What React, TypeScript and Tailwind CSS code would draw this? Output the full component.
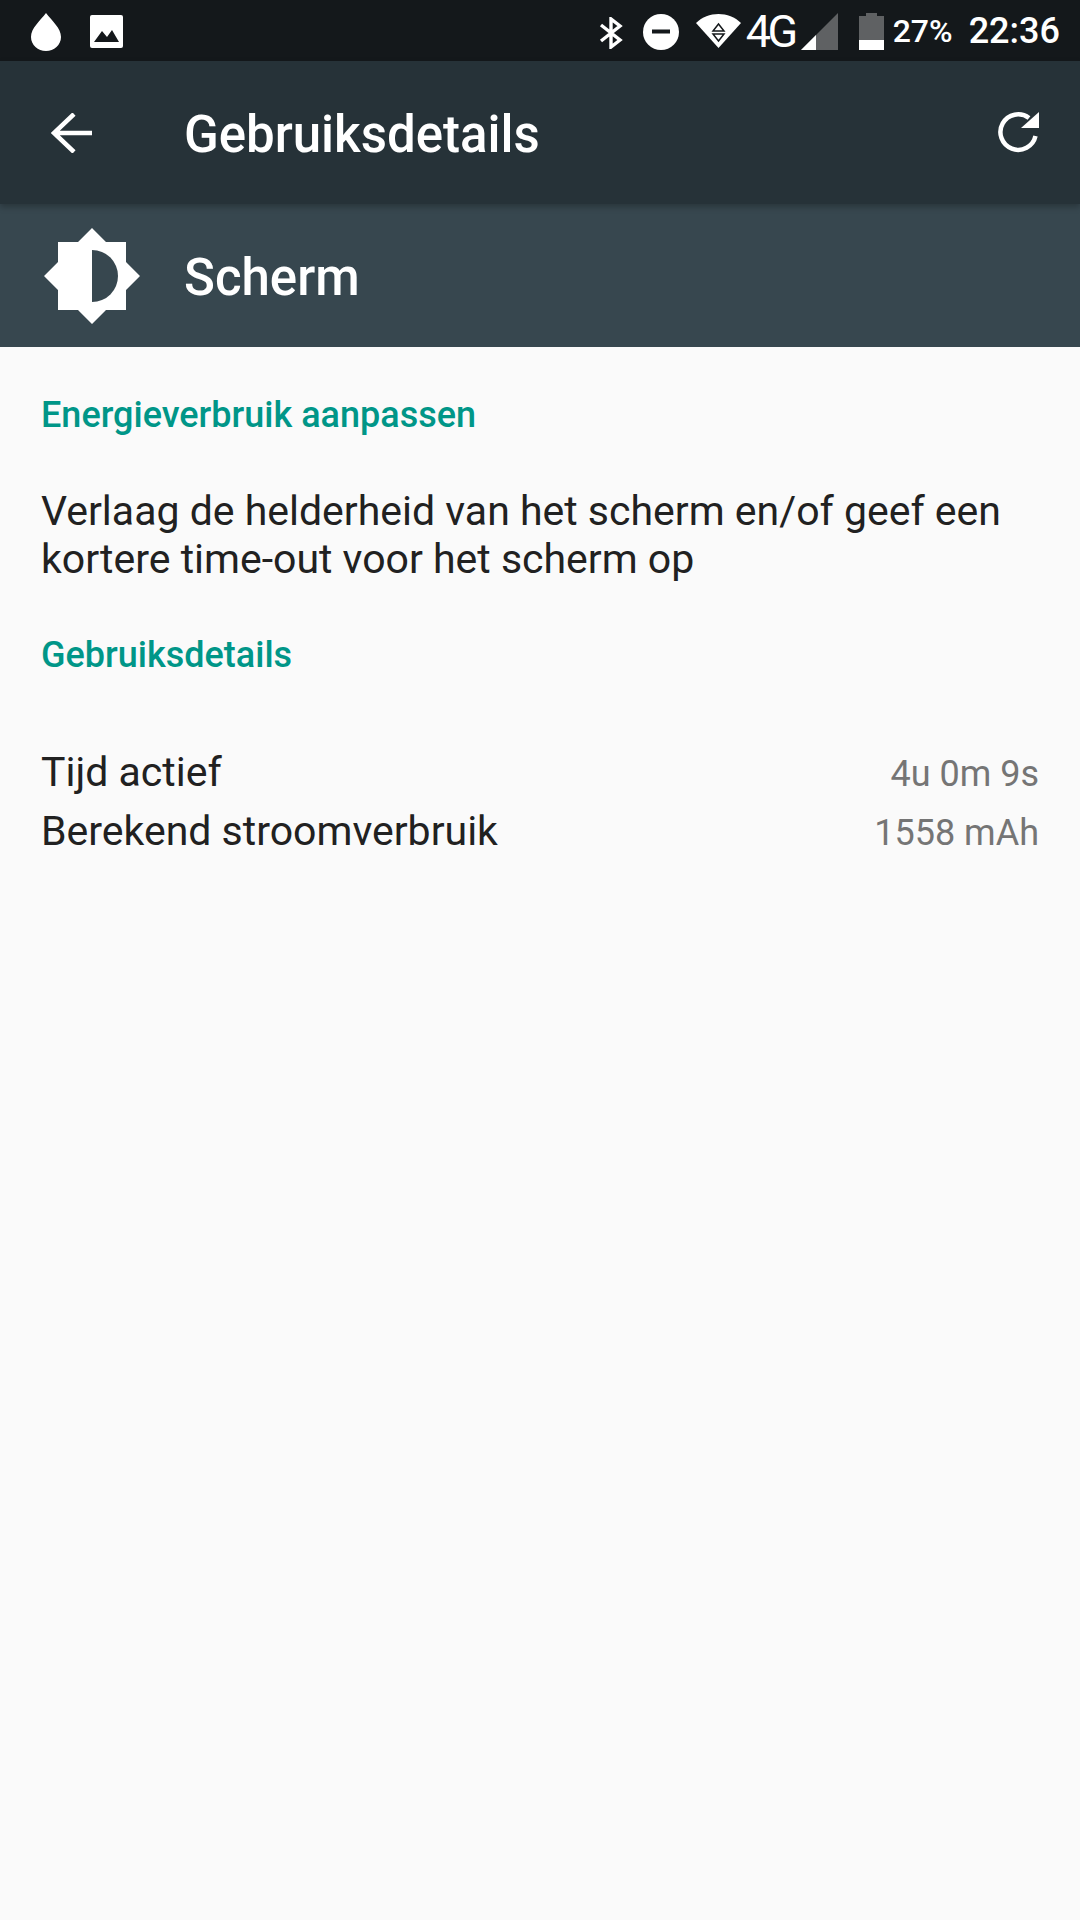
import React from 'react';

const StatusBar = () => (
  <div className="h-[61px] bg-[#14181b] flex items-center text-white shrink-0">
    <svg width="34" height="40" viewBox="0 0 34 40" className="ml-[29px] mt-[2px]" fill="#fff">
      <path d="M17 1 C11 9 2 16 2 25 C2 33 9 39 17 39 C25 39 32 33 32 25 C32 16 23 9 17 1 Z" />
    </svg>
    <svg width="33" height="33" viewBox="0 0 33 33" className="ml-[27px] mt-[1px]">
      <rect x="0" y="0" width="33" height="33" rx="2" fill="#fff" />
      <path d="M4 27 L12 16 L17 22 L22 15 L29 27 Z" fill="#14181b" />
    </svg>
    <div className="flex-1" />
    <svg width="24" height="32" viewBox="0 0 24 32" fill="none" stroke="#fff" strokeWidth="3.4" className="mt-[4px]">
      <path d="M2 8 L21 23 L12 30 L12 2 L21 9 L2 24" />
    </svg>
    <svg width="36" height="36" viewBox="0 0 36 36" className="ml-[20px] mt-[2px]">
      <circle cx="18" cy="18" r="18" fill="#fff" />
      <rect x="9" y="15.5" width="18" height="4" fill="#14181b" />
    </svg>
    <svg width="45" height="34" viewBox="0 0 45 34" className="ml-[17px] mt-[1px]">
      <path d="M0 9 C12 -3 33 -3 45 9 L22.5 34 Z" fill="#fff" />
      <path d="M22.5 10 L28 17 L17 17 Z M17 20 L28 20 L22.5 27 Z" fill="none" stroke="#14181b" strokeWidth="1.5" />
    </svg>
    <span className="ml-[5px] text-[45px] leading-none font-normal tracking-[-3.5px] w-[50px] mt-[1px]">4G</span>
    <svg width="37" height="37" viewBox="0 0 37 37" className="ml-[5px] mt-[1px]">
      <path d="M37 0 L37 37 L0 37 Z" fill="#5f6163" />
      <path d="M15 22 L15 37 L0 37 Z" fill="#fff" />
    </svg>
    <svg width="25" height="37" viewBox="0 0 25 37" className="ml-[21px] mt-[1px]">
      <path d="M0 3 L7 3 L7 0 L18 0 L18 3 L25 3 L25 27 L0 27 Z" fill="#5f6163" />
      <rect x="0" y="27" width="25" height="10" fill="#fff" />
    </svg>
    <span className="ml-[9px] text-[32px] leading-none font-medium w-[60px] mt-[1px]">27%</span>
    <span className="ml-[16px] mr-[20px] text-[36px] leading-none font-medium mt-[1px]">22:36</span>
  </div>
);

const Toolbar = () => (
  <div className="h-[143px] bg-[#263238] flex items-center text-white shrink-0 relative z-10 shadow-[0_3px_6px_rgba(0,0,0,0.25)]">
    <svg width="42" height="40" viewBox="0 0 42 40" fill="none" stroke="#fff" strokeWidth="4.5" className="ml-[51px]">
      <path d="M41 20 L3 20 M23 1 L3 20 L23 39" />
    </svg>
    <span className="ml-[91px] text-[51px] font-medium leading-none mt-[4px]">Gebruiksdetails</span>
    <div className="flex-1" />
    <svg width="42" height="42" viewBox="0 0 42 42" fill="none" className="mr-[40px] mb-[1px]">
      <path d="M37.5 25 A17.75 17.75 0 1 1 31 7" stroke="#fff" strokeWidth="4.5" />
      <path d="M41 1 L41 17 L23 17 Z" fill="#fff" />
    </svg>
  </div>
);

const AppHeader = () => (
  <div className="h-[143px] bg-[#37474f] flex items-center text-white shrink-0">
    <svg width="96" height="96" viewBox="0 0 96 96" className="ml-[44px]">
      <path d="M48 0 L62 14 L82 14 L82 34 L96 48 L82 62 L82 82 L62 82 L48 96 L34 82 L14 82 L14 62 L0 48 L14 34 L14 14 L34 14 Z" fill="#fff" />
      <path d="M48 22 A26 26 0 0 1 48 74 Z" fill="#37474f" />
    </svg>
    <span className="ml-[44px] text-[51px] font-medium leading-none mt-[4px]">Scherm</span>
  </div>
);

const rows = [
  { label: 'Tijd actief', value: '4u 0m 9s' },
  { label: 'Berekend stroomverbruik', value: '1558 mAh' },
];

export default function App() {
  return (
    <div className="w-[1080px] h-[1920px] bg-[#fafafa] flex flex-col overflow-hidden font-['Roboto',sans-serif]">
      <StatusBar />
      <Toolbar />
      <AppHeader />
      <div className="px-[41px] flex flex-col">
        <div className="mt-[48px] text-[36px] leading-[40px] font-medium text-[#009688]">Energieverbruik aanpassen</div>
        <div className="mt-[52px] text-[41px] leading-[48px] text-[#212121]">
          Verlaag de helderheid van het scherm en/of geef een kortere time-out voor het scherm op
        </div>
        <div className="mt-[52px] text-[36px] leading-[40px] font-medium text-[#009688]">Gebruiksdetails</div>
        <div className="mt-[68px] flex flex-col">
          {rows.map((r) => (
            <div key={r.label} className="h-[59px] flex items-center justify-between">
              <span className="text-[41px] text-[#212121] leading-none">{r.label}</span>
              <span className="text-[36px] text-[#757575] leading-none mt-[2px]">{r.value}</span>
            </div>
          ))}
        </div>
      </div>
    </div>
  );
}
